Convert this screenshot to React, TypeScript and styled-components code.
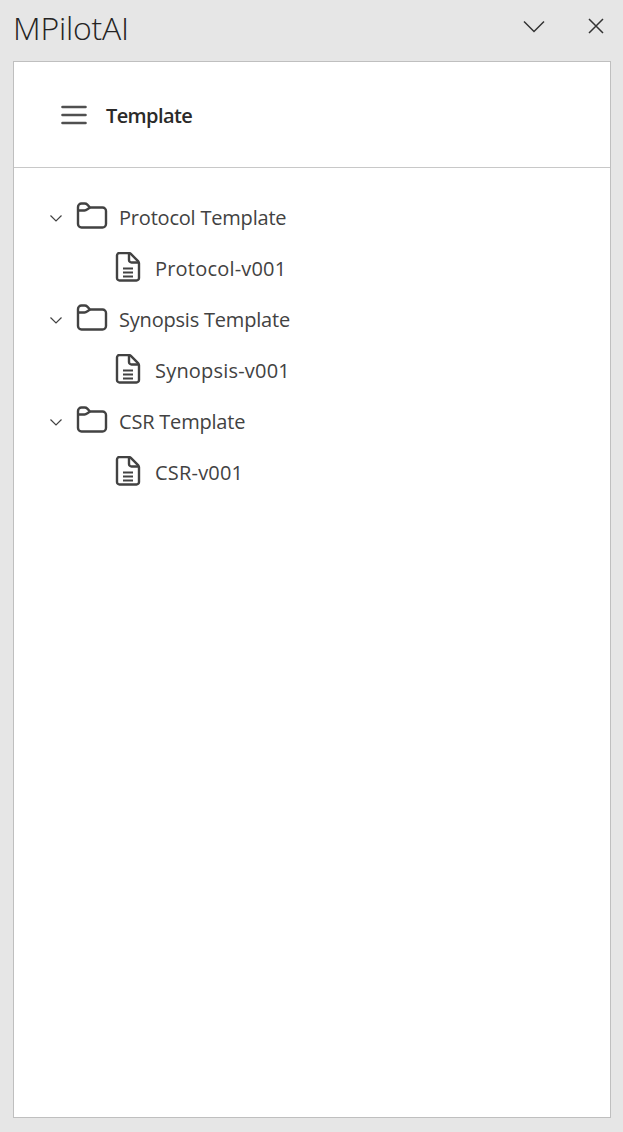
import styled, { createGlobalStyle } from "styled-components";

const GlobalStyle = createGlobalStyle`
  html, body {
    margin: 0;
    padding: 0;
    background: #e6e6e6;
  }
  body {
    font-family: "Open Sans", "Noto Sans", "Liberation Sans", sans-serif;
  }
`;

const Page = styled.div`
  width: 623px;
  height: 1132px;
  padding: 0 12px 14px 13px;
  box-sizing: border-box;
  display: flex;
  flex-direction: column;
  background: #e6e6e6;
`;

const TitleBar = styled.div`
  height: 61px;
  display: flex;
  align-items: flex-start;
  justify-content: space-between;
  flex-shrink: 0;
`;

const AppName = styled.h1`
  margin: 7px 0 0 0;
  font-size: 32px;
  line-height: 42px;
  font-weight: 300;
  letter-spacing: -0.2px;
  color: #252423;
`;

const WindowButtons = styled.div`
  display: flex;
  align-items: center;
  gap: 42px;
  margin: 16px 4px 0 0;
  color: #333;
`;

const Panel = styled.main`
  flex: 1;
  background: #fff;
  border: 1px solid #bfbfbf;
  display: flex;
  flex-direction: column;
`;

const PanelHeader = styled.header`
  height: 106px;
  box-sizing: border-box;
  border-bottom: 1px solid #c8c8c8;
  display: flex;
  align-items: center;
  gap: 19px;
  padding-left: 47px;
  color: #505050;
`;

const PanelTitle = styled.h2`
  margin: 2px 0 0 0;
  font-size: 20px;
  font-weight: 600;
  letter-spacing: -0.6px;
  color: #2b2a29;
`;

const Tree = styled.ul`
  list-style: none;
  margin: 0;
  padding: 24px 0 0 0;
`;

const Row = styled.li<{ $child?: boolean }>`
  height: 51px;
  display: flex;
  align-items: center;
  padding-left: ${(p) => (p.$child ? 101 : 35)}px;
  color: #424242;
`;

const Chevron = styled.svg`
  width: 14px;
  height: 14px;
  margin-right: 13px;
  flex-shrink: 0;
`;

const ItemIcon = styled.svg<{ $child?: boolean }>`
  width: ${(p) => (p.$child ? 26 : 32)}px;
  height: 32px;
  margin: 0 ${(p) => (p.$child ? 14 : 11)}px 1px 0;
  flex-shrink: 0;
`;

const Label = styled.span<{ $child?: boolean }>`
  font-size: 20px;
  letter-spacing: ${(p) => (p.$child ? "0.2px" : "-0.2px")};
  white-space: nowrap;
`;

const ChevronDown = () => (
  <Chevron viewBox="0 0 14 14" fill="none" stroke="currentColor" strokeWidth="1.2">
    <path d="M1.5 4.5 7 10l5.5-5.5" />
  </Chevron>
);

const FolderIcon = () => (
  <ItemIcon viewBox="0 0 32 32" fill="none" stroke="#424242" strokeWidth="2.4" strokeLinejoin="round">
    <path d="M2 6a3.500 3.500 0 0 1 3.500-3.500h3.200c1 0 1.900.4 2.600 1.100L14 6.500h12.500a3.500 3.500 0 0 1 3.500 3.500v13a3.500 3.500 0 0 1-3.500 3.500h-21A3.500 3.500 0 0 1 2 23z" />
    <path d="M2 9.500h6.500c1 0 1.900-.4 2.600-1.100L14 6.500" />
  </ItemIcon>
);

const FileIcon = () => (
  <ItemIcon $child viewBox="0 0 26 32" fill="none" stroke="#424242" strokeWidth="2.4" strokeLinejoin="round">
    <path d="M2 3.500A2.500 2.500 0 0 1 4.500 1h9.300c.7 0 1.300.3 1.800.7l7.700 7.700c.4.500.7 1.100.7 1.800V26a2.500 2.500 0 0 1-2.500 2.500h-17A2.500 2.500 0 0 1 2 26z" />
    <path d="M14 1.500V8a2.500 2.500 0 0 0 2.500 2.500h7" />
    <path d="M8 16.500h10M8 20.500h10M8 24.500h10" strokeWidth="2" />
  </ItemIcon>
);

const templates = [
  { folder: "Protocol Template", file: "Protocol-v001" },
  { folder: "Synopsis Template", file: "Synopsis-v001" },
  { folder: "CSR Template", file: "CSR-v001" },
];

export default function App() {
  return (
    <>
      <GlobalStyle />
      <Page>
        <TitleBar>
          <AppName>MPilotAI</AppName>
          <WindowButtons>
            <svg width="22" height="22" viewBox="0 0 22 22" fill="none" stroke="currentColor" strokeWidth="1.5">
              <path d="M1 5.500 11 15.500 21 5.500" />
            </svg>
            <svg width="20" height="20" viewBox="0 0 20 20" fill="none" stroke="currentColor" strokeWidth="1.5">
              <path d="M2 2l14 14M16 2 2 16" />
            </svg>
          </WindowButtons>
        </TitleBar>
        <Panel>
          <PanelHeader>
            <svg width="26" height="20" viewBox="0 0 26 20" fill="none" stroke="currentColor" strokeWidth="2.6" strokeLinecap="round">
              <path d="M1.500 2h23M1.500 10h23M1.500 18h23" />
            </svg>
            <PanelTitle>Template</PanelTitle>
          </PanelHeader>
          <Tree>
            {templates.map((t) => [
              <Row key={t.folder}>
                <ChevronDown />
                <FolderIcon />
                <Label>{t.folder}</Label>
              </Row>,
              <Row key={t.file} $child>
                <FileIcon />
                <Label $child>{t.file}</Label>
              </Row>,
            ])}
          </Tree>
        </Panel>
      </Page>
    </>
  );
}
